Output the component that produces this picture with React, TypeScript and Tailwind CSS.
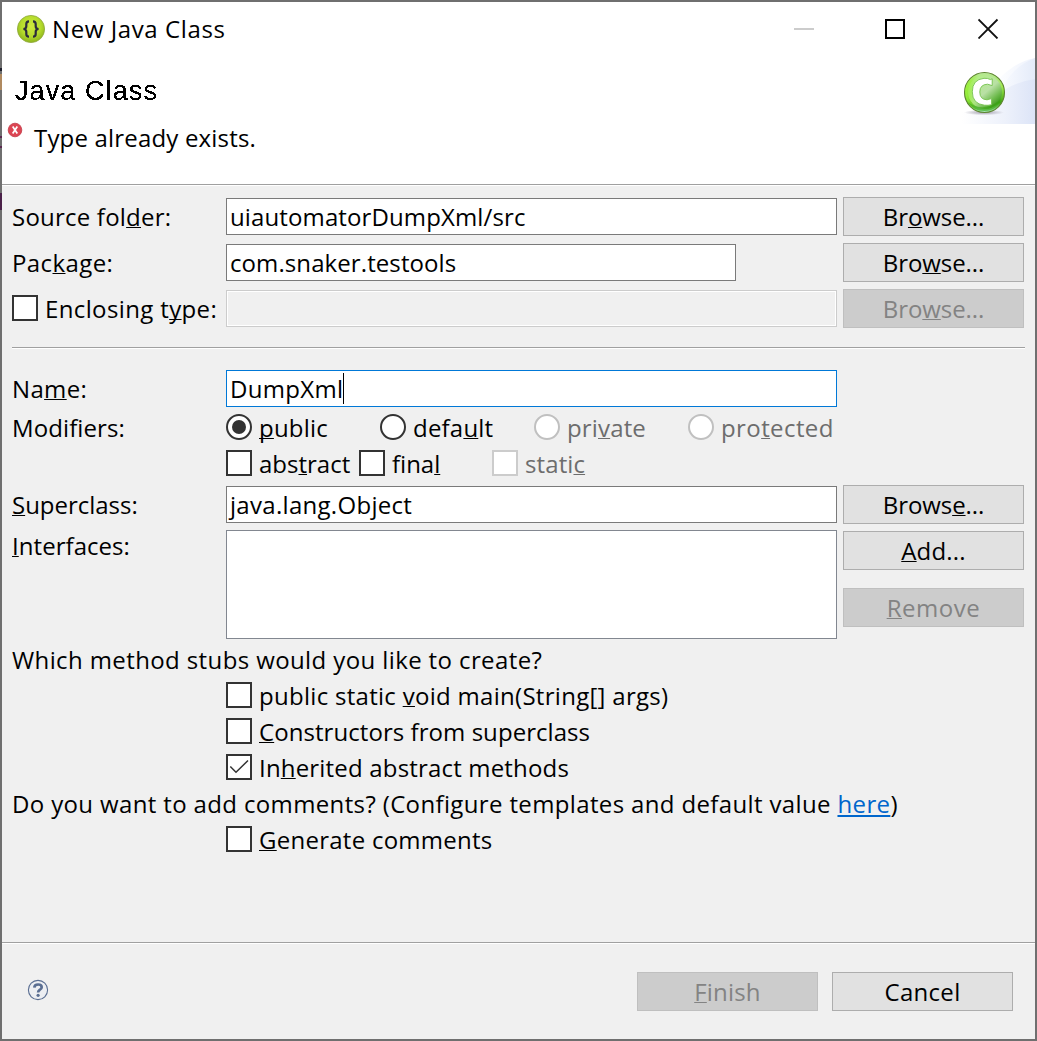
import React from 'react';

// Renders a caption; the character after "&" is the underlined mnemonic.
function Caption({ text, className = '' }: { text: string; className?: string }) {
  const i = text.indexOf('&');
  if (i < 0) return <span className={`whitespace-pre ${className}`}>{text}</span>;
  return (
    <span className={`whitespace-pre ${className}`}>
      {text.slice(0, i)}
      <span className="underline decoration-1 underline-offset-1 [text-decoration-skip-ink:none]">{text[i + 1]}</span>
      {text.slice(i + 2)}
    </span>
  );
}

function Button({ text, disabled = false, className = '' }: { text: string; disabled?: boolean; className?: string }) {
  return (
    <button
      className={`flex h-[39px] w-[181px] shrink-0 justify-center border leading-[37px] ${
        disabled ? 'border-[#bfbfbf] bg-[#cccccc] text-[#838383]' : 'border-[#adadad] bg-[#e1e1e1] text-black'
      } ${className}`}
    >
      <Caption text={text} />
    </button>
  );
}

function Field({ children, className = '' }: { children?: React.ReactNode; className?: string }) {
  return (
    <div className={`my-px flex h-[37px] border pl-[3px] leading-[35px] ${className}`}>
      {children}
    </div>
  );
}

function Box({ text, checked = false, disabled = false, className = '' }: { text: string; checked?: boolean; disabled?: boolean; className?: string }) {
  return (
    <label className={`flex h-9 items-center gap-[7px] leading-9 ${disabled ? 'text-[#6d6d6d]' : 'text-black'} ${className}`}>
      <span className={`mb-[2px] size-[26px] shrink-0 border-2 bg-white ${disabled ? 'border-[#cccccc]' : 'border-[#333333]'}`}>
        {checked && (
          <svg viewBox="0 0 22 22" className="block size-[22px]" fill="none" stroke="#333" strokeWidth="1.5">
            <path d="M2.3 10.5 8 16.3 20 4.5" />
          </svg>
        )}
      </span>
      <Caption text={text} />
    </label>
  );
}

function Radio({ text, checked = false, disabled = false, className = '' }: { text: string; checked?: boolean; disabled?: boolean; className?: string }) {
  return (
    <label className={`flex h-9 w-[154px] shrink-0 items-center gap-[7px] leading-9 ${disabled ? 'text-[#6d6d6d]' : 'text-black'} ${className}`}>
      <span className={`mb-[2px] flex size-[26px] shrink-0 items-center justify-center rounded-full border-2 bg-white ${disabled ? 'border-[#c0c0c0]' : 'border-[#333333]'}`}>
        {checked && <span className="size-[14px] rounded-full bg-[#333333]" />}
      </span>
      <Caption text={text} />
    </label>
  );
}

function Row({ children, className = '' }: { children: React.ReactNode; className?: string }) {
  return <div className={`grid grid-cols-[214px_611px_181px] items-start ${className}`}>{children}</div>;
}

function BracesIcon() {
  return (
    <svg viewBox="0 0 30 30" className="size-[30px]">
      <defs>
        <radialGradient id="lime" cx="0.5" cy="0.4" r="0.6">
          <stop offset="0" stopColor="#d0ea3e" />
          <stop offset="0.6" stopColor="#b5dc2c" />
          <stop offset="1" stopColor="#8db31c" />
        </radialGradient>
      </defs>
      <circle cx="15" cy="15" r="13.6" fill="url(#lime)" stroke="#8fa83c" strokeWidth="0.8" />
      <g fill="none" stroke="#2c2c3c" strokeWidth="2.2">
        <path d="M13 7.300C10.600 7.300 10.300 8.300 10.300 10v2.200C10.300 14 9.300 14.800 7.500 15c1.800.2 2.800 1 2.800 2.800V20c0 1.700.3 2.700 2.700 2.700" />
        <path d="M17 7.300c2.400 0 2.700 1 2.700 2.700v2.200c0 1.800 1 2.600 2.800 2.800-1.800.2-2.800 1-2.800 2.800V20c0 1.700-.3 2.700-2.700 2.700" />
      </g>
    </svg>
  );
}

function ClassBanner() {
  return (
    <svg viewBox="0 0 73 67" className="h-[67px] w-[73px]">
      <defs>
        <linearGradient id="swoosh" gradientUnits="userSpaceOnUse" x1="0" y1="0" x2="73" y2="0">
          <stop offset="0" stopColor="#ffffff" />
          <stop offset="0.6" stopColor="#edf1fb" />
          <stop offset="1" stopColor="#dce4f7" />
        </linearGradient>
        <linearGradient id="swooshFaint" gradientUnits="userSpaceOnUse" x1="38" y1="0" x2="73" y2="0">
          <stop offset="0" stopColor="#fcfdff" />
          <stop offset="1" stopColor="#eef2fc" />
        </linearGradient>
        <linearGradient id="swooshLight" gradientUnits="userSpaceOnUse" x1="42" y1="0" x2="73" y2="0">
          <stop offset="0" stopColor="#f8faff" />
          <stop offset="1" stopColor="#e4ebf9" />
        </linearGradient>
        <linearGradient id="rim" x1="0" y1="0" x2="0" y2="1">
          <stop offset="0" stopColor="#b9e89a" />
          <stop offset="0.35" stopColor="#a0ea50" />
          <stop offset="0.75" stopColor="#3fa512" />
          <stop offset="1" stopColor="#a9ecc0" />
        </linearGradient>
        <linearGradient id="orb" x1="0.9" y1="0.9" x2="0.25" y2="0.15">
          <stop offset="0" stopColor="#2f9010" />
          <stop offset="0.25" stopColor="#6dba4c" />
          <stop offset="0.55" stopColor="#b9e0a5" />
          <stop offset="1" stopColor="#b4ec8c" />
        </linearGradient>
        <linearGradient id="leftGlow" x1="0" x2="1">
          <stop offset="0" stopColor="#9af03c" />
          <stop offset="0.35" stopColor="#9af03c" stopOpacity="0" />
        </linearGradient>
        <radialGradient id="shadow">
          <stop offset="0" stopColor="#8c8799" stopOpacity="0.8" />
          <stop offset="1" stopColor="#8c8799" stopOpacity="0" />
        </radialGradient>
      </defs>
      <path d="M34 66V24Q52 4 73 0V66Z" fill="url(#swooshFaint)" />
      <path d="M42 66V27Q52 8 73 0V66Z" fill="url(#swooshLight)" />
      <path d="M0 66V54Q30 52 42 32Q54 24 73 21V66Z" fill="url(#swoosh)" />
      <ellipse cx="22" cy="54.500" rx="20" ry="2.800" fill="url(#shadow)" />
      <circle cx="22.500" cy="34.500" r="20" fill="url(#rim)" stroke="#5e8430" strokeWidth="1.100" />
      <circle cx="23" cy="34" r="17" fill="url(#orb)" />
      <circle cx="22.500" cy="34.500" r="19.300" fill="url(#leftGlow)" />
      <path d="M6 44Q22 56 39 41Q35 53 22.500 53Q11 53 6 44Z" fill="#36a20e" fillOpacity="0.55" />
      <path
        d="M30.200 20.800V27.600L25.500 26.200Q17.800 26.500 17.800 34Q17.800 41.500 25 41.800L29.600 40.600V46.700Q26 47.600 22.500 47.200Q10.300 46 10.300 33.800Q10.300 21.500 22 20.300Q25.500 20 28.500 21.600Z"
        fill="#fff"
        stroke="#74c24c"
        strokeWidth="0.9"
      />
    </svg>
  );
}

export default function App() {
  return (
    <div className="flex h-[1041px] w-[1037px] bg-[linear-gradient(#6f6f6f_0_68px,#20202c_68px_71px,#6f6f6f_71px_74px,#b08a60_74px_90px,#6f6f6f_90px_136px,#5a2850_136px_138px,#6f6f6f_138px_146px,#5a2850_146px_148px,#6f6f6f_148px_193px,#4a2048_193px_210px,#6f6f6f_210px)] p-[2px] font-['Open_Sans',sans-serif] text-[24px] text-black">
      <svg className="absolute size-0">
        <filter id="crisp" x="0" y="0" width="1" height="1" colorInterpolationFilters="sRGB">
          <feComponentTransfer>
            <feFuncA type="discrete" tableValues="0 0 1 1 1" />
          </feComponentTransfer>
        </filter>
      </svg>
      <div className="flex w-[1033px] flex-col bg-[#f0f0f0] [box-shadow:0_-2px_0_#6f6f6f,2px_0_0_#6f6f6f,0_2px_0_#6f6f6f]">
        <header className="flex h-[183px] shrink-0 flex-col border-b border-[#a0a0a0] bg-white">
          <div className="flex h-[54px] items-center justify-between pl-[14px] pr-[36px]">
            <div className="flex items-center gap-[6px] leading-[54px]">
              <BracesIcon />
              <Caption text="New Java Class" className="tracking-[0.6px]" />
            </div>
            <div className="flex items-center">
              <span className="mr-[71px] h-[2px] w-[20px] bg-[#cccccc]" />
              <span className="mr-[73px] size-[20px] border-2 border-black" />
              <svg viewBox="0 0 21 21" className="mb-px size-[21px]" stroke="#111" strokeWidth="1.8">
                <path d="M0.500 1.500 19.500 20.500M19.500 1.500 0.500 20.500" />
              </svg>
            </div>
          </div>
          <div className="flex h-[128px] justify-between">
            <div className="flex flex-col">
              <h1 className="mt-[16px] h-[38px] pl-[13px] font-['Liberation_Sans',sans-serif] text-[27px] font-normal leading-[38px] tracking-[1.1px] [filter:url(#crisp)]">
                Java Class
              </h1>
              <div className="flex pl-[5px] pt-[10px]">
                <svg viewBox="0 0 16 16" className="mr-[11px] mt-[2px] size-4">
                  <circle cx="8" cy="8" r="6.800" fill="#dc4553" stroke="#c23a48" strokeWidth="0.8" />
                  <path d="M5.700 4.500 10.300 11.500M10.300 4.500 5.700 11.500" stroke="#fff" strokeWidth="1.700" />
                </svg>
                <Caption text="Type already exists." className="leading-9 tracking-[0.18px]" />
              </div>
            </div>
            <div className="pt-[2px]">
              <ClassBanner />
            </div>
          </div>
        </header>

        <main className="flex flex-1 flex-col border-t border-white pl-[10px] pt-[11px]">
          <div className="flex flex-col gap-[7px] leading-[39px]">
            <Row>
              <Caption text="Source fol&der:" className="tracking-[0.22px]" />
              <Field className="border-[#7a7a7a] bg-white">
                <Caption text="uiautomatorDumpXml/src" className="tracking-[0.12px]" />
              </Field>
              <Button text="Br&owse..." className="ml-[6px] tracking-[-0.1px]" />
            </Row>
            <Row>
              <Caption text="Pac&kage:" className="tracking-[0.4px]" />
              <Field className="w-[510px] border-[#7a7a7a] bg-white">
                <Caption text="com.snaker.testools" className="tracking-[0.09px]" />
              </Field>
              <Button text="Bro&wse..." className="ml-[6px] tracking-[-0.1px]" />
            </Row>
            <Row>
              <Box text="Enclosing t&ype:" className="mt-[2px] tracking-[0.37px]" />
              <Field className="border-[#cccccc] shadow-[inset_0_0_0_1px_#fff]" />
              <Button text="Bro&wse..." disabled className="ml-[6px] tracking-[-0.1px]" />
            </Row>
          </div>

          <div className="mr-[10px] mt-[19px] h-[2px] border-b border-t border-b-white border-t-[#a0a0a0]" />

          <Row className="mt-[20px] leading-[39px]">
            <Caption text="Na&me:" className="tracking-[0.35px]" />
            <Field className="border-[#0078d7] bg-white">
              <Caption text="DumpXml" className="tracking-[0.31px]" />
              <span className="mt-[2px] h-[31px] w-px bg-black" />
            </Field>
          </Row>
          <Row className="mt-[2px] leading-9">
            <Caption text="Modifiers:" className="tracking-[0.1px]" />
            <div>
              <div className="flex">
                <Radio text="&public" checked className="tracking-[0.2px]" />
                <Radio text="defa&ult" className="tracking-[0.2px]" />
                <Radio text="pri&vate" disabled className="tracking-[0.15px]" />
                <Radio text="pro&tected" disabled className="tracking-[0.4px]" />
              </div>
              <div className="flex">
                <Box text="abs&tract" className="w-[133px]" />
                <Box text="fina&l" className="w-[133px]" />
                <Box text="stati&c" disabled className="tracking-[0.1px]" />
              </div>
            </div>
          </Row>
          <Row className="mt-[3px] leading-[39px]">
            <Caption text="&Superclass:" className="tracking-[-0.02px]" />
            <Field className="border-[#7a7a7a] bg-white">
              <Caption text="java.lang.Object" className="tracking-[0.3px]" />
            </Field>
            <Button text="Brows&e..." className="ml-[6px] tracking-[-0.1px]" />
          </Row>
          <Row className="mt-[6px] h-[109px]">
            <Caption text="&Interfaces:" className="-mt-[2px] leading-9 tracking-[0.05px]" />
            <div className="h-[109px] border border-[#828790] bg-white" />
            <div className="flex flex-col gap-[18px] pl-[6px] pt-px">
              <Button text="&Add..." className="tracking-[0.17px]" />
              <Button text="&Remove" disabled className="tracking-[0.55px]" />
            </div>
          </Row>

          <Caption text="Which method stubs would you like to create?" className="mt-[3px] leading-9 tracking-[0.39px]" />
          <div className="pl-[214px]">
            <Box text="public static &void main(String[] args)" className="tracking-[0.29px]" />
            <Box text="&Constructors from superclass" className="tracking-[0.06px]" />
            <Box text="In&herited abstract methods" checked className="tracking-[0.18px]" />
          </div>
          <p className="whitespace-pre leading-9 tracking-[0.36px]">
            Do you want to add comments? (Configure templates and default value{' '}
            <a className="text-[#0066cc] underline decoration-2 underline-offset-2">here</a>)
          </p>
          <div className="pl-[214px]">
            <Box text="&Generate comments" className="tracking-[0.26px]" />
          </div>
        </main>

        <footer className="flex h-[97px] shrink-0 justify-between border-t border-[#a0a0a0] shadow-[inset_0_1px_0_#fff]">
          <svg viewBox="0 0 22 22" className="ml-[25px] mt-[36px] size-[22px]">
            <circle cx="11" cy="11" r="9.600" fill="#eceef2" stroke="#5a6e92" strokeWidth="1.100" />
            <path d="M7.300 8.600Q7.500 5.500 11.100 5.500Q14.700 5.500 14.700 8.200Q14.700 9.700 12.700 10.900Q11.100 12 11.100 13.600" fill="none" stroke="#5a6e92" strokeWidth="2.700" />
            <circle cx="11.100" cy="16.300" r="1.600" fill="#5a6e92" />
          </svg>
          <div className="flex gap-[14px] pr-[22px] pt-[29px]">
            <Button text="&Finish" disabled className="tracking-[0.2px]" />
            <Button text="Cancel" className="tracking-[0.3px]" />
          </div>
        </footer>
      </div>
    </div>
  );
}
